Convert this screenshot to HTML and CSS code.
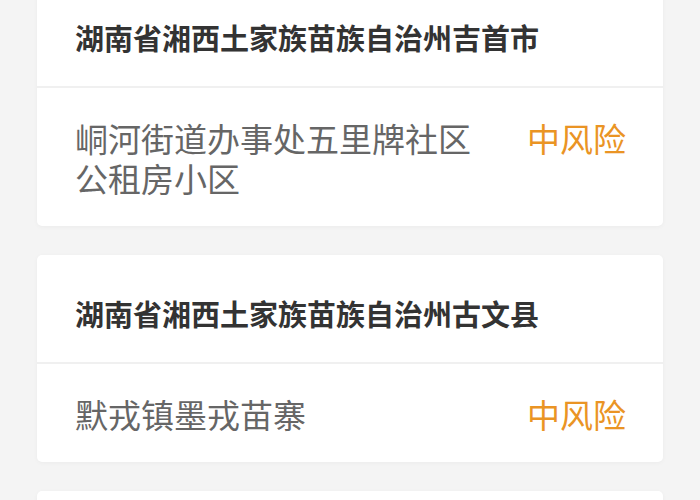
FILE: index.html
```html
<!DOCTYPE html>
<html lang="zh-CN">
<head>
  <meta charset="UTF-8">
  <title>风险地区</title>
  <link rel="stylesheet" href="styles.css">
</head>
<body>
  <div class="list">
    <div class="card">
      <div class="card-head">湖南省湘西土家族苗族自治州吉首市</div>
      <div class="card-row">
        <span class="place">峒河街道办事处五里牌社区公租房小区</span>
        <span class="level">中风险</span>
      </div>
    </div>

    <div class="card">
      <div class="card-head">湖南省湘西土家族苗族自治州古文县</div>
      <div class="card-row">
        <span class="place">默戎镇墨戎苗寨</span>
        <span class="level">中风险</span>
      </div>
    </div>

    <div class="card">
      <div class="card-head">湖南省湘西土家族苗族自治州花垣县</div>
      <div class="card-row">
        <span class="place">边城镇茶峒村</span>
        <span class="level">中风险</span>
      </div>
    </div>
  </div>
</body>
</html>
```

FILE: styles.css
```css
body {
  margin: 0;
  background-color: #f4f4f4;
  font-family: "Noto Sans CJK SC", "Noto Sans", sans-serif;
}

/* list scrolled a little past the first card's top */
.list {
  display: flex;
  flex-direction: column;
  gap: 29px;
  padding: 0 37px;
  margin-top: -21px;
}

.card {
  background-color: #fff;
  border-radius: 5px;
  box-shadow: 0 1px 4px rgba(0, 0, 0, 0.04);
}

.card-head {
  padding: 40px 38px 31px;
  font-size: 29px;
  line-height: 36px;
  font-weight: bold;
  color: #333;
  border-bottom: 2px solid #f0f0f0;
}

.card-row {
  display: flex;
  align-items: flex-start;
  padding: 30px 37px 28px 38px;
}

.place {
  flex: 1;
  font-size: 33px;
  line-height: 40px;
  color: #666;
}

.level {
  margin-left: 56px;
  font-size: 33px;
  line-height: 40px;
  color: #ea9424;
  white-space: nowrap;
}
```
